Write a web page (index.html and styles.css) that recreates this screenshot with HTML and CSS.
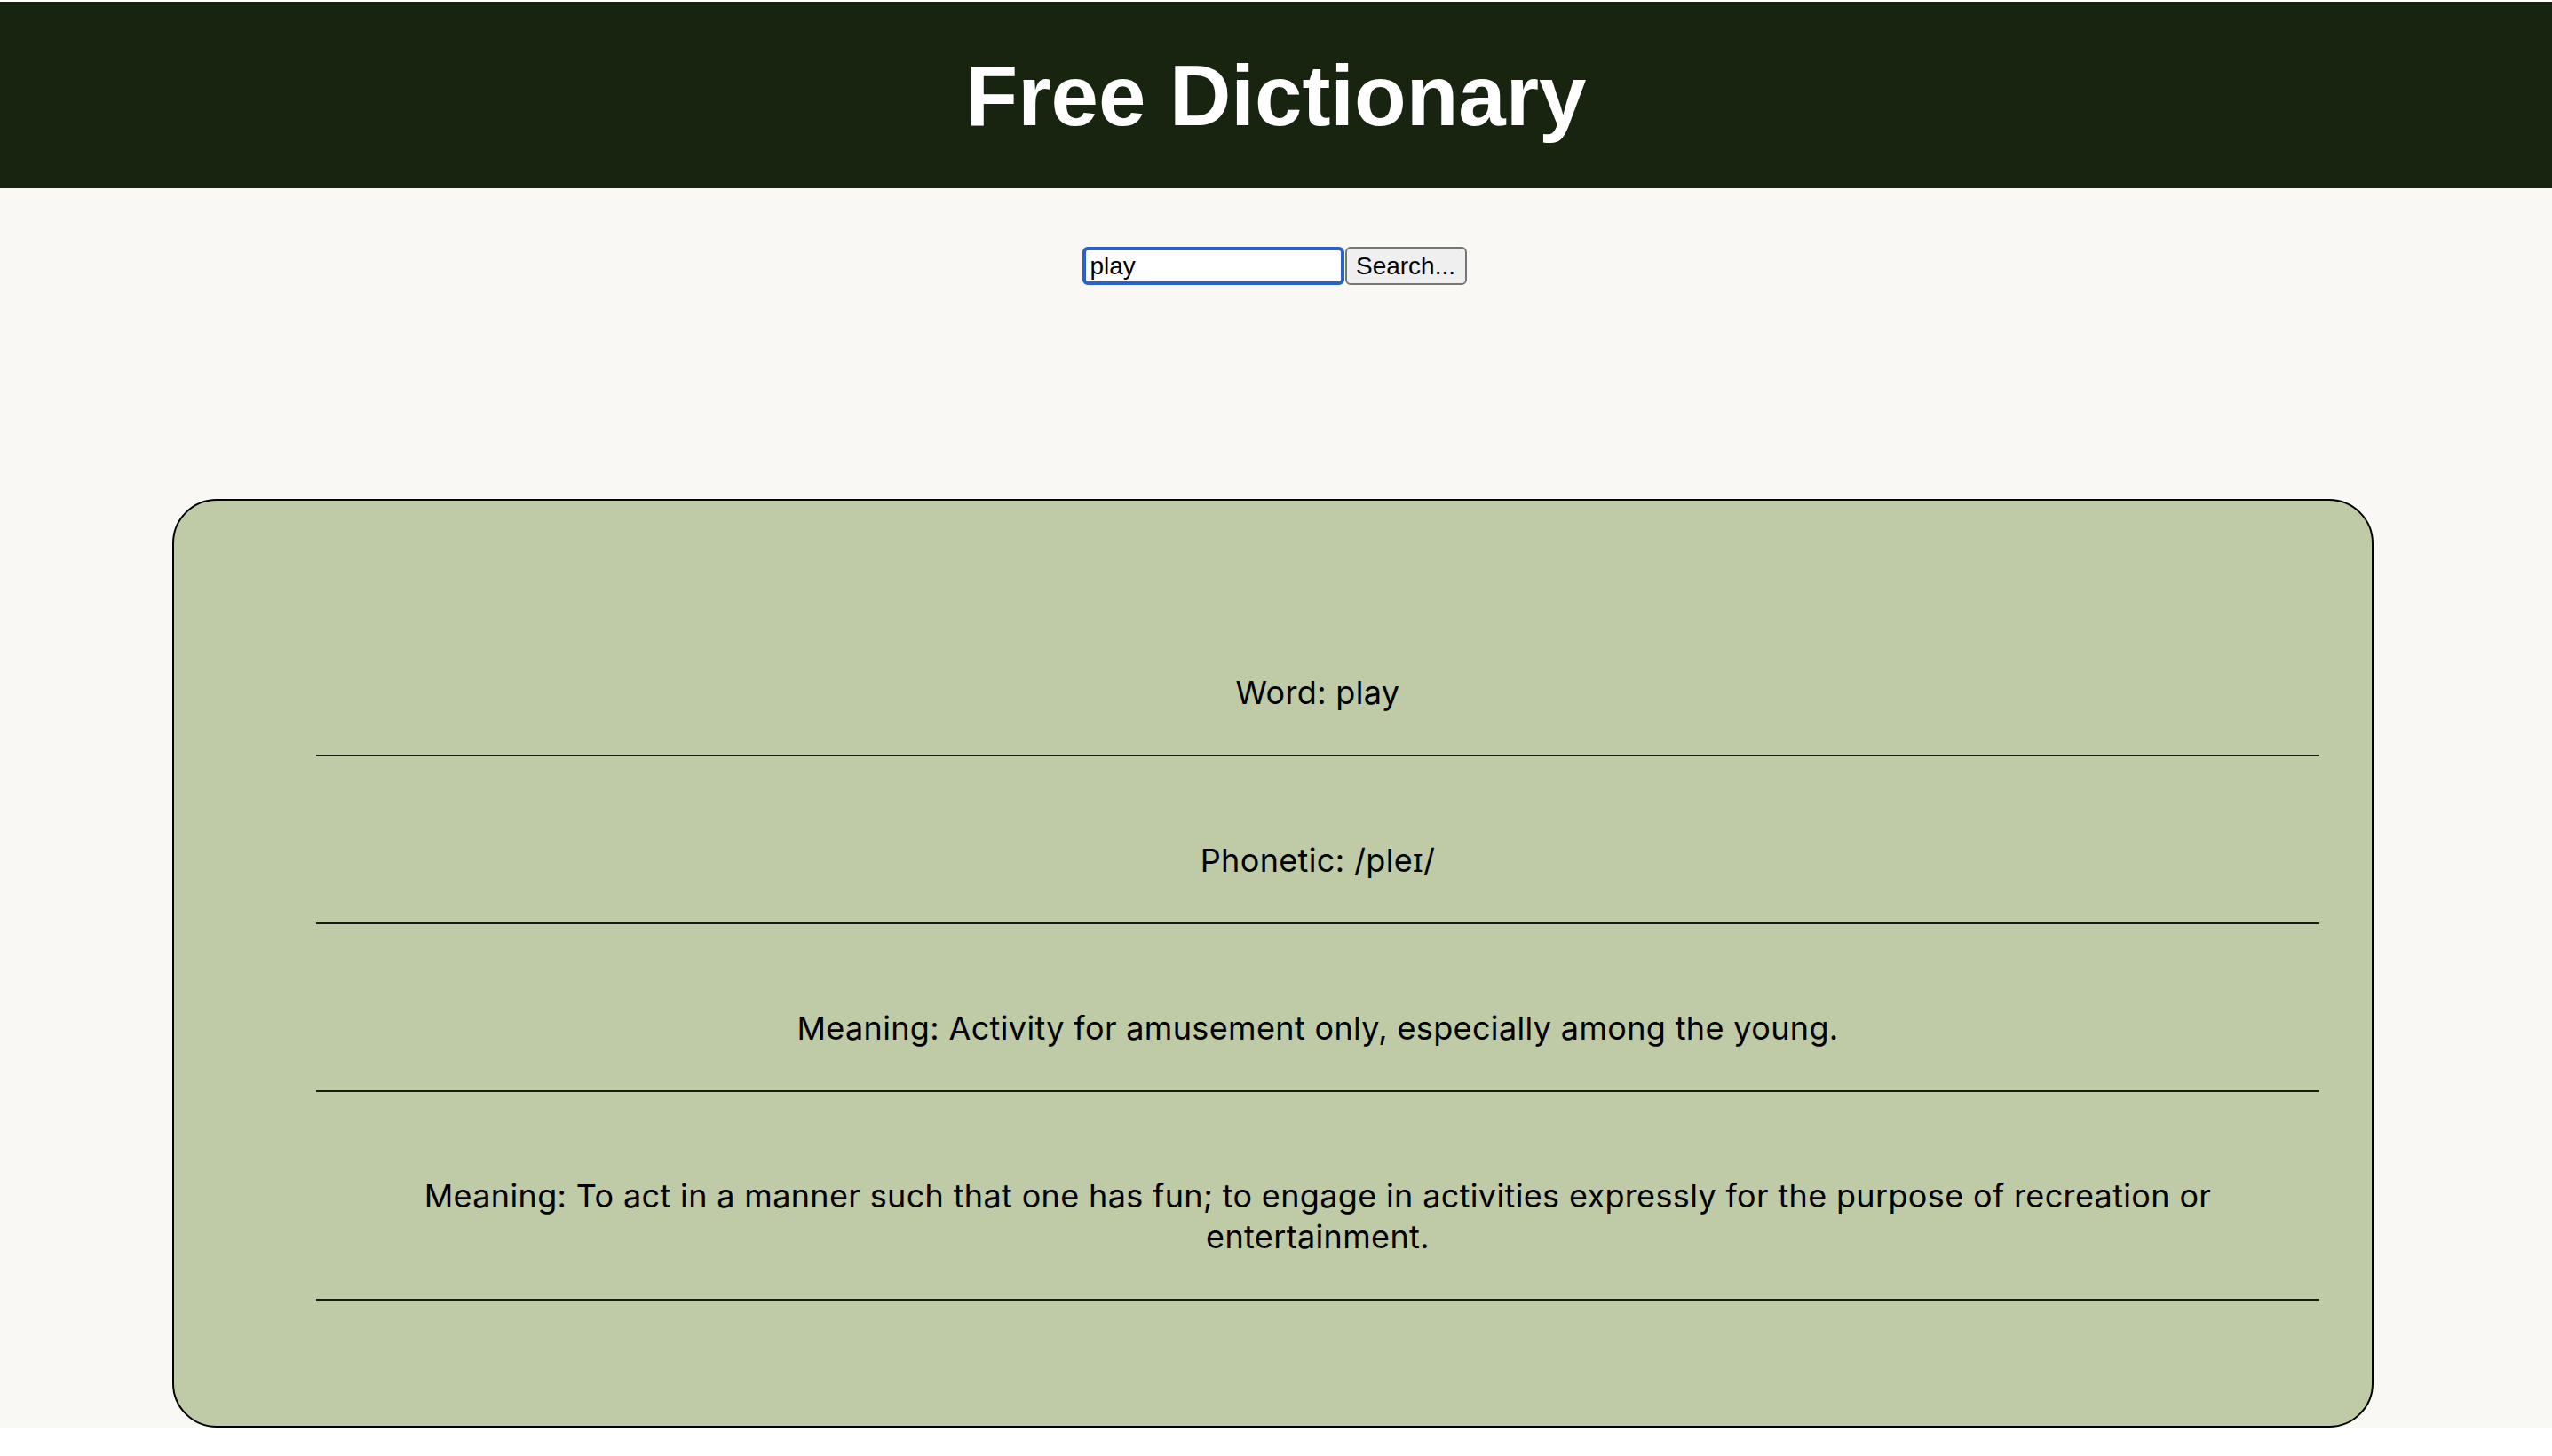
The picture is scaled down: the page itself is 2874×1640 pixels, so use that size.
FILE: index.html
```html
<!DOCTYPE html>
<html lang="en">
<head>
<meta charset="utf-8">
<title>Free Dictionary</title>
<link rel="stylesheet" href="styles.css">
</head>
<body>
<div class="page">
  <header class="topbar">
    <h1 class="title">Free Dictionary</h1>
  </header>
  <form class="search">
    <input class="search-input" type="text" value="play"><button class="search-btn" type="button">Search...</button>
  </form>
  <section class="card">
    <div class="entries">
      <div class="entry"><p>Word: play</p></div>
      <div class="entry"><p>Phonetic: /pleɪ/</p></div>
      <div class="entry"><p>Meaning: Activity for amusement only, especially among the young.</p></div>
      <div class="entry"><p>Meaning: To act in a manner such that one has fun; to engage in activities expressly for the purpose of recreation or entertainment.</p></div>
    </div>
  </section>
</div>
</body>
</html>
```

FILE: styles.css
```css
html {
  background: #ffffff;
}
body {
  margin: 0;
  padding-top: 2px;
}
.page {
  background: #f9f8f4;
}
.topbar {
  background: #172410;
  height: 210px;
  box-sizing: border-box;
  padding-top: 51px;
}
.title {
  margin: 0;
  text-align: center;
  color: #ffffff;
  font-family: "Liberation Sans", Arial, sans-serif;
  font-weight: 700;
  font-size: 96px;
  line-height: 110px;
}
.search {
  display: flex;
  justify-content: center;
  padding-top: 66px;
  padding-right: 4px;
  margin: 0;
}
.search-input {
  box-sizing: border-box;
  width: 295px;
  height: 43px;
  border: 4px solid #2b5fc9;
  border-radius: 6px;
  background: #ffffff;
  font-family: "Liberation Sans", Arial, sans-serif;
  font-size: 28px;
  color: #000;
  padding: 0 0 0 5px;
  outline: none;
  margin: 0;
}
.search-btn {
  box-sizing: border-box;
  width: 137px;
  height: 43px;
  border: 2px solid #767676;
  border-radius: 6px;
  background: #efefef;
  font-family: "Liberation Sans", Arial, sans-serif;
  font-size: 28px;
  color: #000;
  padding: 0;
  margin: 0 0 0 1px;
}
.card {
  margin: 241px 201px 0 194px;
  background: #bfcaa6;
  border: 2px solid #000000;
  border-radius: 50px;
  padding: 99px 59px 141px 160px;
}
.entry {
  border-bottom: 2px solid #0f1f10;
  padding: 94px 0 47px;
}
.entry p {
  margin: 0;
  text-align: center;
  font-family: Inter, "Noto Sans", sans-serif;
  font-size: 36px;
  line-height: 46px;
  letter-spacing: 0.35px;
  color: #000;
}
```
